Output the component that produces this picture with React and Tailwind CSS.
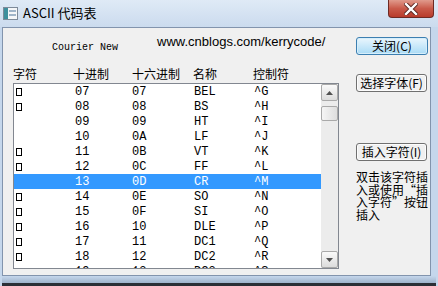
import React from "react";

const rows = [
  { box: true, dec: "07", hex: "07", name: "BEL", ctrl: "^G" },
  { box: true, dec: "08", hex: "08", name: "BS", ctrl: "^H" },
  { box: false, dec: "09", hex: "09", name: "HT", ctrl: "^I" },
  { box: false, dec: "10", hex: "0A", name: "LF", ctrl: "^J" },
  { box: true, dec: "11", hex: "0B", name: "VT", ctrl: "^K" },
  { box: true, dec: "12", hex: "0C", name: "FF", ctrl: "^L" },
  { box: false, dec: "13", hex: "0D", name: "CR", ctrl: "^M", sel: true },
  { box: true, dec: "14", hex: "0E", name: "SO", ctrl: "^N" },
  { box: true, dec: "15", hex: "0F", name: "SI", ctrl: "^O" },
  { box: true, dec: "16", hex: "10", name: "DLE", ctrl: "^P" },
  { box: true, dec: "17", hex: "11", name: "DC1", ctrl: "^Q" },
  { box: true, dec: "18", hex: "12", name: "DC2", ctrl: "^R" },
  { box: true, dec: "19", hex: "13", name: "DC3", ctrl: "^S" },
];

const cjk = "font-['Noto_Sans_CJK_SC','Noto_Sans',sans-serif]";
const mono = "font-['Liberation_Mono','DejaVu_Sans_Mono',monospace]";

function AppIcon() {
  return (
    <svg width="15" height="13" viewBox="0 0 15 13">
      <rect x="0.5" y="0.5" width="14" height="12" fill="#f4f6f8" stroke="#7d8a99" />
      <rect x="1" y="1" width="4" height="11" fill="#3d8f9d" />
      <rect x="6" y="3" width="7" height="2" fill="#9fb4c8" />
      <rect x="6" y="7" width="7" height="2" fill="#9fb4c8" />
    </svg>
  );
}

function CloseButton() {
  return (
    <div className="w-[46px] h-[18px] mr-[4px] rounded-b-[4px] border border-t-0 border-[#6e2a24] bg-gradient-to-b from-[#e09a8c] via-[#c95a4a] to-[#b83b2b] flex items-center justify-center">
      <svg width="14" height="12" viewBox="0 0 14 12">
        <path d="M2 1 L12 11 M12 1 L2 11" stroke="#5a2620" strokeWidth="4.2" strokeLinecap="square" />
        <path d="M2 1 L12 11 M12 1 L2 11" stroke="#ffffff" strokeWidth="2.4" strokeLinecap="square" />
      </svg>
    </div>
  );
}

function Box() {
  return <span className="inline-block w-[6px] h-[8px] border border-black border-x-[1.5px]" />;
}

function ScrollArrow({ up }) {
  return (
    <div className="h-[17px] w-[17px] flex items-center justify-center rounded-[2px] border border-[#a9a9a9] bg-gradient-to-b from-[#fafafa] to-[#dcdcdc]">
      <svg width="7" height="4" viewBox="0 0 7 4">
        <path d={up ? "M0 4 L3.5 0 L7 4 Z" : "M0 0 L7 0 L3.5 4 Z"} fill="#505050" />
      </svg>
    </div>
  );
}

function ClassicButton({ children }) {
  return (
    <div className={`w-[71px] h-[18px] rounded-[3px] border border-[#707070] bg-[#f0f0f0] shadow-[inset_0_0_0_1px_#fcfcfc] flex items-center justify-center text-[12px] leading-none text-black ${cjk}`}>
      {children}
    </div>
  );
}

export default function App() {
  return (
    <div className="w-[438px] h-[286px] overflow-hidden flex flex-col bg-[#c5d7ec]">
      <div className="h-[27px] shrink-0 flex bg-gradient-to-b from-[#dfeaf6] to-[#cbdbee]">
        <div className="flex items-center h-[26px] pl-[3px] gap-[5px]">
          <AppIcon />
          <span className={`text-[13px] text-black ${cjk}`}>ASCII 代码表</span>
        </div>
        <div className="flex-1" />
        <CloseButton />
      </div>

      <div className="flex-1 flex flex-col px-[2px]">
        <div className="h-[249px] w-[429px] border border-[#8294ad] bg-[#f0f0f0] flex">
          <div className="pl-[10px] flex flex-col">
            <div className="h-[39px] flex items-start">
              <span className={`mt-[14px] ml-[39px] text-[10px] leading-[12px] text-black ${mono}`}>Courier New</span>
              <span className="mt-[6px] ml-[39px] text-[13px] leading-[16px] text-black font-['Liberation_Sans',Arial,sans-serif]">
                www.cnblogs.com/kerrycode/
              </span>
            </div>
            <div className={`h-[16px] flex text-[12px] leading-[14px] text-black ${cjk}`}>
              <span className="w-[60px]">字符</span>
              <span className="w-[59px]">十进制</span>
              <span className="w-[61px]">十六进制</span>
              <span className="w-[60px]">名称</span>
              <span>控制符</span>
            </div>
            <div className="w-[326px] h-[186px] border border-[#828790] bg-white flex overflow-hidden">
              <div className={`flex-1 flex flex-col overflow-hidden text-[12px] ${mono}`}>
                {rows.map((r) => (
                  <div
                    key={r.dec}
                    className={`h-[15px] shrink-0 flex items-center pl-[2px] ${r.sel ? "bg-[#3399ff] text-white" : "text-black"}`}
                  >
                    <span className="w-[59px] flex items-center">{r.box && <Box />}</span>
                    <span className="w-[57px]">{r.dec}</span>
                    <span className="w-[62px]">{r.hex}</span>
                    <span className="w-[60px]">{r.name}</span>
                    <span>{r.ctrl}</span>
                  </div>
                ))}
              </div>
              <div className="w-[17px] flex flex-col bg-[#ececec]">
                <ScrollArrow up />
                <div className="mt-[5px] h-[15px] rounded-[2px] border border-[#a9a9a9] bg-gradient-to-r from-[#f5f5f5] to-[#dedede]" />
                <div className="flex-1" />
                <ScrollArrow />
              </div>
            </div>
          </div>

          <div className="ml-[17px] flex flex-col">
            <div className={`mt-[9px] w-[72px] h-[18px] rounded-[3px] border border-[#3c7fb1] bg-gradient-to-b from-[#eaf6fd] to-[#a9dbf6] shadow-[inset_0_0_0_1px_#d6eefb] flex items-center justify-center text-[12px] leading-none text-black ${cjk}`}>
              关闭(C)
            </div>
            <div className="mt-[19px]">
              <ClassicButton>选择字体(F)</ClassicButton>
            </div>
            <div className="mt-[51px]">
              <ClassicButton>插入字符(I)</ClassicButton>
            </div>
            <div className={`mt-[10px] w-[74px] text-[12px] leading-[12.5px] text-black whitespace-nowrap ${cjk}`}>
              <div className="h-[12.5px]">双击该字符插</div>
              <div className="h-[12.5px]">入或使用“插</div>
              <div className="h-[12.5px]">入字符”按钮</div>
              <div className="h-[12.5px]">插入</div>
            </div>
          </div>
        </div>
        <div className="flex-1 bg-gradient-to-b from-[#c5d7ec] to-[#9fb3cb] border-b-[3px] border-[#2b2f36]" />
      </div>
    </div>
  );
}
